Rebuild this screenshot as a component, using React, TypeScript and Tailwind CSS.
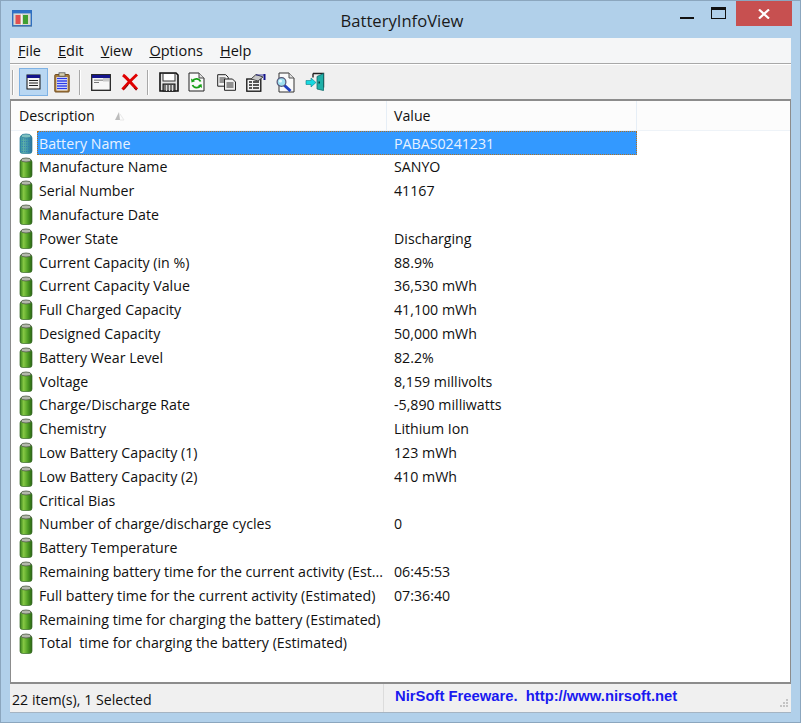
import React from 'react'

const rows: [string, string][] = [
  ['Battery Name', 'PABAS0241231'],
  ['Manufacture Name', 'SANYO'],
  ['Serial Number', '41167'],
  ['Manufacture Date', ''],
  ['Power State', 'Discharging'],
  ['Current Capacity (in %)', '88.9%'],
  ['Current Capacity Value', '36,530 mWh'],
  ['Full Charged Capacity', '41,100 mWh'],
  ['Designed Capacity', '50,000 mWh'],
  ['Battery Wear Level', '82.2%'],
  ['Voltage', '8,159 millivolts'],
  ['Charge/Discharge Rate', '-5,890 milliwatts'],
  ['Chemistry', 'Lithium Ion'],
  ['Low Battery Capacity (1)', '123 mWh'],
  ['Low Battery Capacity (2)', '410 mWh'],
  ['Critical Bias', ''],
  ['Number of charge/discharge cycles', '0'],
  ['Battery Temperature', ''],
  ['Remaining battery time for the current activity (Est...', '06:45:53'],
  ['Full battery time for the current activity (Estimated)', '07:36:40'],
  ['Remaining time for charging the battery (Estimated)', ''],
  ['Total  time for charging the battery (Estimated)', ''],
]

function BatteryIcon({ selected }: { selected: boolean }) {
  const id = selected ? 'batS' : 'batN'
  return (
    <svg width="14" height="21" viewBox="0 0 14 21" className="shrink-0">
      <defs>
        <linearGradient id={id} x1="0" x2="1" y1="0" y2="0">
          <stop offset="0" stopColor={selected ? '#2f8f9f' : '#357f1a'} />
          <stop offset="0.3" stopColor={selected ? '#5fb0a8' : '#86c844'} />
          <stop offset="0.65" stopColor={selected ? '#3f96a8' : '#4f9e24'} />
          <stop offset="1" stopColor={selected ? '#2a6f96' : '#2a6414'} />
        </linearGradient>
      </defs>
      <rect x="1" y="2.5" width="12" height="18" rx="2.5" fill={`url(#${id})`} stroke={selected ? '#2d7f9a' : '#3a6a2a'} strokeWidth="0.7" />
      <ellipse cx="7" cy="3" rx="5" ry="2" fill={selected ? '#7cc0c0' : '#b4b8ac'} stroke={selected ? '#2d7f9a' : '#4d5b42'} strokeWidth="0.8" />
      {selected && <path d="M1 6h12M1 8.5h12M1 11h12M1 13.5h12M1 16h12M1 18.5h12" stroke="#2f78b8" strokeWidth="0.8" strokeDasharray="1 1" />}
    </svg>
  )
}

function AppIcon() {
  return (
    <svg width="20" height="17" viewBox="0 0 20 17">
      <rect x="0.7" y="0.7" width="18.6" height="15" fill="#d8d8d0" stroke="#2f6fc0" strokeWidth="1.4" />
      <rect x="1" y="1" width="18" height="2.4" fill="#2f72c8" />
      <rect x="3.5" y="5" width="5" height="9" fill="#e05050" />
      <rect x="11" y="5" width="5" height="9" fill="#3f9f30" />
      <rect x="9" y="4" width="1" height="11" fill="#f4f4f0" />
      <rect x="0" y="15.6" width="20" height="1.4" fill="#5f7f9f" opacity="0.6" />
    </svg>
  )
}

const Sep = () => <div className="w-[2px] h-[25px] bg-[#a8a8a8] border-r border-white shrink-0" />

function ToolIcons({ name }: { name: string }) {
  if (name === 'props') {
    return (
      <svg width="15" height="16" viewBox="0 0 15 16">
        <rect x="1" y="1" width="13" height="14" fill="#f4f4f4" stroke="#111" />
        <rect x="1" y="1" width="13" height="3" fill="#14148c" />
        <path d="M3 6.5h9M3 9h9M3 11.5h9" stroke="#222" strokeWidth="1.2" />
      </svg>
    )
  }
  if (name === 'clip') {
    return (
      <svg width="16" height="21" viewBox="0 0 16 21">
        <rect x="0.8" y="2.5" width="14.4" height="17.5" rx="0.8" fill="#a87c3c" stroke="#704c20" />
        <rect x="2.5" y="5" width="11" height="13.5" fill="#fff" />
        <path d="M3 6.5h10M3 9h10M3 11.5h10M3 14h10M3 16.5h10" stroke="#2a3ae8" strokeWidth="1.5" />
        <rect x="5" y="0.8" width="6" height="3.4" fill="#d8d0b0" stroke="#555" strokeWidth="0.8" />
      </svg>
    )
  }
  if (name === 'window') {
    return (
      <svg width="20" height="17" viewBox="0 0 20 17">
        <rect x="0.7" y="0.7" width="18.6" height="15.6" fill="#f6f6f6" stroke="#222" strokeWidth="1.3" />
        <rect x="1" y="1" width="18" height="3" fill="#14148c" />
        <rect x="3" y="5.5" width="14" height="1.4" fill="#999" />
        <path d="M3 8.5h5" stroke="#777" strokeWidth="1" />
        <rect x="12" y="4" width="6" height="3.5" fill="#c8c8c8" />
      </svg>
    )
  }
  if (name === 'delete') {
    return (
      <svg width="18" height="18" viewBox="0 0 18 18">
        <path d="M2 2 C6 5 11 11 16 16.5 M16 1.5 C11 6 6 11 1.5 16.5" stroke="#e00000" strokeWidth="3" fill="none" />
        <path d="M3 16.5 L7 12 M13 15 L16 17" stroke="#701010" strokeWidth="1" fill="none" />
      </svg>
    )
  }
  if (name === 'save') {
    return (
      <svg width="20" height="20" viewBox="0 0 20 20">
        <path d="M1 1h16l2 2v16H1z" fill="#e4e4e4" stroke="#111" strokeWidth="1.6" />
        <rect x="4" y="1.5" width="12" height="7.5" fill="#fff" stroke="#333" />
        <rect x="4" y="12" width="12" height="7" fill="#777" stroke="#111" />
        <path d="M7.5 13v6M10.5 13v6M13.5 13v6" stroke="#ddd" />
      </svg>
    )
  }
  if (name === 'refresh') {
    return (
      <svg width="17" height="20" viewBox="0 0 17 20">
        <path d="M1 1h10l5 5v13H1z" fill="#fafafa" stroke="#222" />
        <path d="M11 1v5h5" fill="#ddd" stroke="#444" />
        <path d="M12.5 9.5 A4.5 4.5 0 0 0 4.5 9" stroke="#16a016" strokeWidth="1.8" fill="none" />
        <path d="M3 6.5l0.5 4 3.5-1.2z" fill="#16a016" />
        <path d="M4.5 13 A4.5 4.5 0 0 0 12.5 13.5" stroke="#16a016" strokeWidth="1.8" fill="none" />
        <path d="M14 16l-0.5-4-3.5 1.2z" fill="#16a016" />
      </svg>
    )
  }
  if (name === 'copy') {
    return (
      <svg width="19" height="17" viewBox="0 0 19 17">
        <path d="M0.7 0.7h8l2.5 2.5v9H0.7z" fill="#f4f4f4" stroke="#222" />
        <path d="M2.5 4h6M2.5 6h6M2.5 8h6" stroke="#333" />
        <path d="M7.5 5h8l3 3v8.3h-11z" fill="#eee" stroke="#222" />
        <path d="M9.5 9h7M9.5 11h7M9.5 13h7" stroke="#333" />
      </svg>
    )
  }
  if (name === 'report') {
    return (
      <svg width="20" height="19" viewBox="0 0 20 19">
        <rect x="0.8" y="6" width="14" height="12.2" fill="#f4f4f4" stroke="#111" strokeWidth="1.3" />
        <path d="M3 9h3M7 9h6M3 12h3M7 12h6M3 15h3M7 15h6" stroke="#222" strokeWidth="1.4" />
        <path d="M5 6 L10 1.5 L17 4 L12 8z" fill="#c8c8c8" stroke="#444" />
        <path d="M18.5 1v6" stroke="#14148c" strokeWidth="2" />
        <path d="M10 2 L18 2" stroke="#14148c" strokeWidth="0.8" />
      </svg>
    )
  }
  if (name === 'find') {
    return (
      <svg width="19" height="21" viewBox="0 0 19 21">
        <path d="M3 1h10l5 5v14H3z" fill="#fafafa" stroke="#333" />
        <path d="M13 1v5h5" fill="#ddd" stroke="#555" />
        <path d="M8 13l6.5 6" stroke="#2040c0" strokeWidth="3" />
        <circle cx="5.5" cy="10" r="4.4" fill="#9fe0f0" stroke="#557" strokeWidth="1.2" />
        <circle cx="4.5" cy="9" r="1.6" fill="#e8fbff" />
      </svg>
    )
  }
  return (
    <svg width="20" height="20" viewBox="0 0 20 20">
      <path d="M8 1.5h10.5v14" fill="none" stroke="#222" strokeWidth="1.4" />
      <path d="M8 1.5v4" stroke="#222" strokeWidth="1.4" />
      <path d="M12 4.5l6.5-3v17l-6.5-1.5z" fill="#1fb0a8" stroke="#0f6a6a" strokeWidth="0.8" />
      <path d="M1 8.5h5V6l5 4.5-5 4.5v-2.5H1z" fill="#16d8e0" stroke="#0f7a80" strokeWidth="0.6" />
      <rect x="13.5" y="9.5" width="1.4" height="2" fill="#0a3a3a" />
    </svg>
  )
}

export default function App() {
  return (
    <div className="w-[801px] h-[723px] bg-[#b1d0ea] border border-[#8ba6be] flex flex-col overflow-hidden font-['Open_Sans','Noto_Sans',sans-serif] text-[14.2px] text-[#101010]">
      {/* title bar */}
      <div className="h-[37px] shrink-0 grid grid-cols-[1fr_auto_1fr] items-start pl-[11px] pr-[8px]">
        <div className="mt-[9px] w-[20px] h-[17px]"><AppIcon /></div>
        <div className="text-center text-[16.6px] leading-[22px] mt-[9px] text-[#1a1a1a]">BatteryInfoView</div>
        <div className="flex items-start justify-end">
          <div className="w-[14px] h-[2px] bg-[#111] mt-[16px]" />
          <div className="w-[15px] h-[12px] ml-[17px] mt-[6px] border border-[#111] border-t-[3px]" />
          <div className="w-[56px] h-[25px] ml-[10px] bg-[#c75050] flex items-center justify-center">
            <svg width="12" height="10" viewBox="0 0 12 10"><path d="M1 0.5 L11 9.5 M11 0.5 L1 9.5" stroke="#fff" strokeWidth="2.2" /></svg>
          </div>
        </div>
      </div>

      {/* client area */}
      <div className="flex-1 mx-[9px] mb-[9px] flex flex-col min-h-0 bg-[#f0f0f0]">
        {/* menu */}
        <div className="h-[26px] shrink-0 bg-[#f5f6f7] border-b border-[#a8a8a8] flex items-center pl-[8px] gap-[17px] text-[14.5px] text-[#111]">
          <span><u>F</u>ile</span>
          <span><u>E</u>dit</span>
          <span><u>V</u>iew</span>
          <span><u>O</u>ptions</span>
          <span><u>H</u>elp</span>
        </div>

        {/* toolbar */}
        <div className="h-[35px] shrink-0 bg-[#f0f0f0] border-t border-white flex items-center pl-[2px]">
          <Sep />
          <div className="ml-[5px] w-[29px] h-[28px] bg-[#b9d7f2] border border-[#7fb2e4] flex items-center justify-center shrink-0">
            <ToolIcons name="props" />
          </div>
          <div className="ml-[6px] w-[16px] flex justify-center shrink-0"><ToolIcons name="clip" /></div>
          <div className="ml-[9px]"><Sep /></div>
          <div className="ml-[10px]"><ToolIcons name="window" /></div>
          <div className="ml-[10px]"><ToolIcons name="delete" /></div>
          <div className="ml-[8px]"><Sep /></div>
          <div className="ml-[10px]"><ToolIcons name="save" /></div>
          <div className="ml-[9px]"><ToolIcons name="refresh" /></div>
          <div className="ml-[12px]"><ToolIcons name="copy" /></div>
          <div className="ml-[10px]"><ToolIcons name="report" /></div>
          <div className="ml-[10px]"><ToolIcons name="find" /></div>
          <div className="ml-[10px]"><ToolIcons name="exit" /></div>
        </div>

        {/* list */}
        <div className="flex-1 min-h-0 bg-white border border-[#8c8c8c] border-b-2 border-t-2 overflow-hidden">
          <div className="h-[30.4px] flex border-b border-[#eef3f8] bg-[#fcfcfc]">
            <div className="w-[376px] shrink-0 border-r border-[#e6eef6] flex items-center pl-[8px]">
              <span className="w-[94px]">Description</span>
              <svg width="12" height="10" viewBox="0 0 12 10"><path d="M6 1 L2 9 L7 9z" fill="#bcbcbc" /><path d="M7 3 L11 9 H7" fill="none" stroke="#e8e8e8" /></svg>
            </div>
            <div className="w-[250px] shrink-0 border-r border-[#e6eef6] flex items-center pl-[7px]">Value</div>
          </div>
          {rows.map(([name, value], i) => (
            <div key={name} className="h-[23.8px] flex items-center">
              <div className="w-[26px] pl-[8px] shrink-0 flex"><BatteryIcon selected={i === 0} /></div>
              <div className={i === 0 ? 'w-[600px] h-full shrink-0 flex items-center bg-[#3399ff] text-[#e8f2ff] outline-1 -outline-offset-1 outline-dotted outline-[#b07020]' : 'w-[600px] h-full shrink-0 flex items-center'}>
                <div className="w-[357px] pl-[2px] whitespace-pre shrink-0">{name}</div>
                <div>{value}</div>
              </div>
            </div>
          ))}
        </div>

        {/* status bar */}
        <div className="h-[29px] shrink-0 flex items-center bg-[#f0f0f0] border-b border-[#a5b4c2]">
          <div className="w-[374px] pl-[2px] pt-[3px] border-r border-[#dcdcdc] h-full flex items-center">22 item(s), 1 Selected</div>
          <div className="flex-1 pl-[11px] pb-[4px] font-['Liberation_Sans',sans-serif] font-bold text-[14.8px] text-[#1a1af0] whitespace-pre">NirSoft Freeware.  http://www.nirsoft.net</div>
          <svg width="12" height="12" viewBox="0 0 12 12" className="self-end mb-[2px] mr-[2px]">
            <path d="M9 1h2v2H9zM6 4h2v2H6zM9 4h2v2H9zM3 7h2v2H3zM6 7h2v2H6zM9 7h2v2H9z" fill="#c4c4c4" />
          </svg>
        </div>
      </div>
    </div>
  )
}
